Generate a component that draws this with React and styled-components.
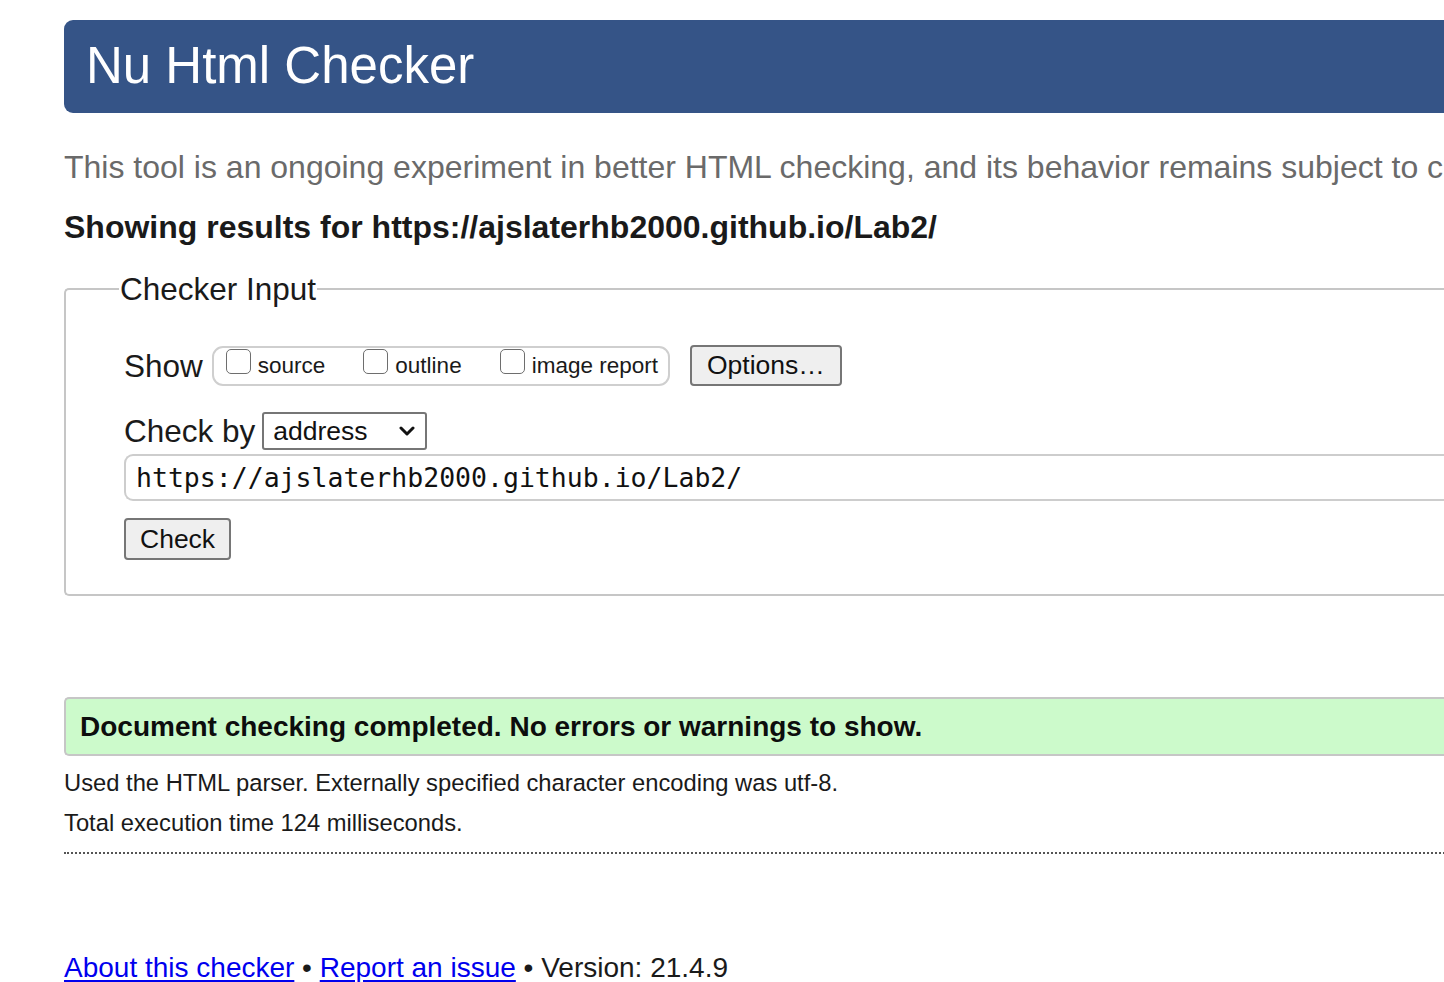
import React from "react";
import styled, { createGlobalStyle } from "styled-components";

const Global = createGlobalStyle`
  html, body { margin: 0; padding: 0; overflow: hidden; background: #fff; }
  body { font-family: "Liberation Sans", Arial, sans-serif; color: #222; }
`;

const Page = styled.div`
  width: 1600px;
  padding: 20px 0 0 64px;
  display: flex;
  flex-direction: column;
`;

const Header = styled.header`
  height: 93px;
  background: #355487;
  border-radius: 9px 0 0 9px;
  display: flex;
  align-items: center;
  padding-left: 22px;
`;

const Title = styled.h1`
  margin: 0;
  font-size: 51px;
  font-weight: 400;
  color: #fff;
  line-height: 1;
  padding-bottom: 2px;
`;

const Intro = styled.p`
  margin: 36px 0 0;
  font-size: 32px;
  line-height: 36px;
  color: #6a6a6a;
  white-space: nowrap;
`;

const Showing = styled.h2`
  margin: 24px 0 0;
  font-size: 32px;
  line-height: 36px;
  font-weight: 700;
  color: #1a1a1a;
  white-space: nowrap;
`;

const Fieldset = styled.fieldset`
  margin: 26px 0 0;
  padding: 0 0 34px 58px;
  border: 2px solid #c6c6c6;
  border-right: none;
  border-radius: 5px 0 0 5px;
  min-width: 0;
`;

const Legend = styled.legend`
  font-size: 31.5px;
  line-height: 36px;
  padding: 0 1px;
  margin-left: -5px;
  color: #1a1a1a;
`;

const Row = styled.div`
  display: flex;
  align-items: center;
  margin-top: ${(p) => p.$mt || 0}px;
`;

const Label = styled.span`
  font-size: 31.5px;
  line-height: 36px;
  color: #1a1a1a;
`;

const ShowGroup = styled.div`
  display: flex;
  align-items: center;
  height: 40px;
  box-sizing: border-box;
  border: 2px solid #cfcfcf;
  border-radius: 11px;
  padding: 0 10px 0 12px;
  margin-left: 9px;
  gap: 38px;
`;

const CheckLabel = styled.label`
  display: flex;
  align-items: center;
  font-size: 22.5px;
  color: #1a1a1a;
  gap: 7px;
`;

const Box = styled.span`
  width: 25px;
  height: 25px;
  box-sizing: border-box;
  border: 1.5px solid #6e6e6e;
  border-radius: 5px;
  background: #fff;
  display: inline-block;
  position: relative;
  top: -4px;
`;

const Button = styled.button`
  font-family: "Liberation Sans", Arial, sans-serif;
  font-size: 26.5px;
  color: #111;
  background: #efefef;
  border: 2px solid #767676;
  border-radius: 4px;
  height: ${(p) => p.$h}px;
  padding: 0 ${(p) => p.$px}px;
  margin-left: ${(p) => p.$ml || 0}px;
  box-sizing: border-box;
  display: flex;
  align-items: center;
`;

const Select = styled.div`
  display: flex;
  align-items: center;
  justify-content: space-between;
  width: 165px;
  height: 38px;
  box-sizing: border-box;
  border: 2px solid #767676;
  border-radius: 3px;
  padding: 0 10px 0 9px;
  margin-left: 7px;
  font-size: 26.5px;
  color: #111;
`;

const UrlInput = styled.div`
  margin-top: 4px;
  height: 47px;
  box-sizing: border-box;
  border: 2px solid #cdcdcd;
  border-right: none;
  border-radius: 9px 0 0 9px;
  display: flex;
  align-items: center;
  padding-left: 10px;
  font-family: "DejaVu Sans Mono", monospace;
  font-size: 26.5px;
  color: #111;
`;

const SuccessBox = styled.div`
  margin-top: 101px;
  height: 59px;
  box-sizing: border-box;
  background: #ccfacb;
  border: 2px solid #c6c6c6;
  border-right: none;
  border-radius: 5px 0 0 5px;
  display: flex;
  align-items: center;
  padding-left: 14px;
  font-size: 28px;
  font-weight: 700;
  color: #0d0d0d;
`;

const Detail = styled.p`
  margin: ${(p) => p.$mt}px 0 0;
  font-size: 23.75px;
  line-height: 26px;
  color: #1a1a1a;
`;

const Dotted = styled.hr`
  margin: 16px 0 0;
  border: none;
  border-top: 2px dotted #555;
  height: 0;
`;

const Footer = styled.footer`
  margin-top: 98px;
  font-size: 28px;
  line-height: 32px;
  color: #1a1a1a;
`;

const Link = styled.a`
  color: #0000ee;
  text-decoration: underline;
  text-underline-offset: 3px;
`;

const Chevron = () => (
  <svg width="16" height="11" viewBox="0 0 16 11">
    <path d="M2 2 L8 8 L14 2" fill="none" stroke="#111" strokeWidth="3" strokeLinecap="round" strokeLinejoin="round" />
  </svg>
);

export default function App() {
  return (
    <Page>
      <Global />
      <Header>
        <Title>Nu Html Checker</Title>
      </Header>
      <Intro>
        This tool is an ongoing experiment in better HTML checking, and its behavior remains subject to change
      </Intro>
      <Showing>Showing results for https://ajslaterhb2000.github.io/Lab2/</Showing>
      <Fieldset>
        <Legend>Checker Input</Legend>
        <Row $mt={38}>
          <Label>Show</Label>
          <ShowGroup>
            <CheckLabel><Box />source</CheckLabel>
            <CheckLabel><Box />outline</CheckLabel>
            <CheckLabel><Box />image report</CheckLabel>
          </ShowGroup>
          <Button $h={41} $px={15} $ml={20}>Options…</Button>
        </Row>
        <Row $mt={26}>
          <Label>Check by</Label>
          <Select>
            <span>address</span>
            <Chevron />
          </Select>
        </Row>
        <UrlInput>https://ajslaterhb2000.github.io/Lab2/</UrlInput>
        <Row $mt={17}>
          <Button $h={42} $px={14}>Check</Button>
        </Row>
      </Fieldset>
      <SuccessBox>Document checking completed. No errors or warnings to show.</SuccessBox>
      <Detail $mt={14}>Used the HTML parser. Externally specified character encoding was utf-8.</Detail>
      <Detail $mt={14}>Total execution time 124 milliseconds.</Detail>
      <Dotted />
      <Footer>
        <Link href="#">About this checker</Link> • <Link href="#">Report an issue</Link> • Version: 21.4.9
      </Footer>
    </Page>
  );
}
